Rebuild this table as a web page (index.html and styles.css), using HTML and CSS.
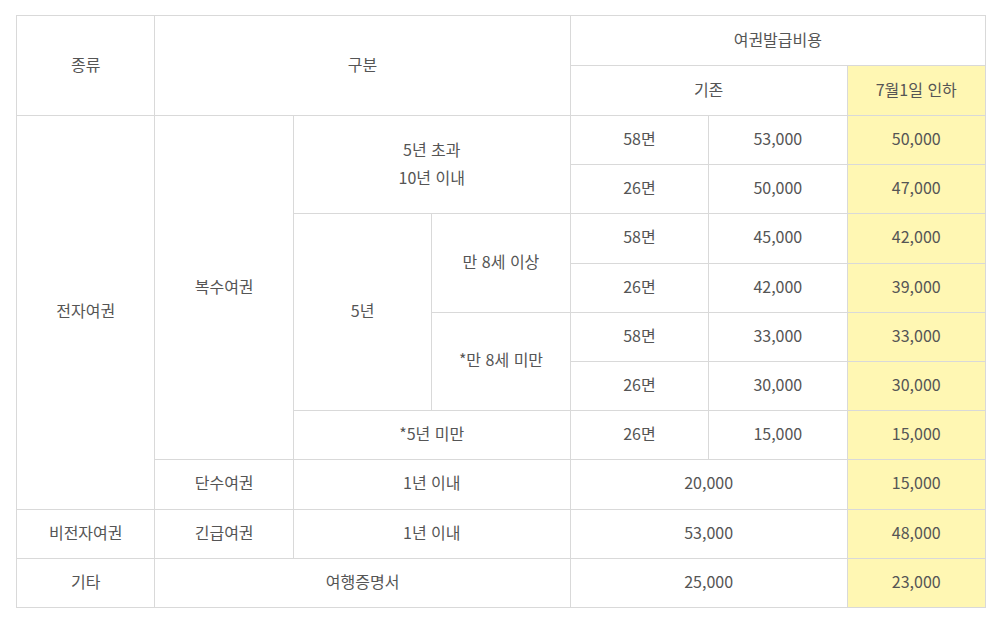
FILE: index.html
```html
<!DOCTYPE html>
<html lang="ko">
<head>
<meta charset="utf-8">
<link rel="stylesheet" href="styles.css">
</head>
<body>
<div class="wrap">
<table class="fee">
  <colgroup>
    <col><col><col><col><col><col><col>
  </colgroup>
  <tr class="hd">
    <td rowspan="2">종류</td>
    <td rowspan="2" colspan="3">구분</td>
    <td colspan="3">여권발급비용</td>
  </tr>
  <tr class="hd">
    <td colspan="2">기존</td>
    <td class="hl">7월1일 인하</td>
  </tr>
  <tr>
    <td rowspan="8">전자여권</td>
    <td rowspan="7">복수여권</td>
    <td rowspan="2" colspan="2" class="two">5년 초과<br>10년 이내</td>
    <td>58면</td><td>53,000</td><td class="hl">50,000</td>
  </tr>
  <tr>
    <td>26면</td><td>50,000</td><td class="hl">47,000</td>
  </tr>
  <tr>
    <td rowspan="4">5년</td>
    <td rowspan="2">만 8세 이상</td>
    <td>58면</td><td>45,000</td><td class="hl">42,000</td>
  </tr>
  <tr>
    <td>26면</td><td>42,000</td><td class="hl">39,000</td>
  </tr>
  <tr>
    <td rowspan="2">*만 8세 미만</td>
    <td>58면</td><td>33,000</td><td class="hl">33,000</td>
  </tr>
  <tr>
    <td>26면</td><td>30,000</td><td class="hl">30,000</td>
  </tr>
  <tr>
    <td colspan="2">*5년 미만</td>
    <td>26면</td><td>15,000</td><td class="hl">15,000</td>
  </tr>
  <tr>
    <td>단수여권</td>
    <td colspan="2">1년 이내</td>
    <td colspan="2">20,000</td><td class="hl">15,000</td>
  </tr>
  <tr>
    <td>비전자여권</td>
    <td>긴급여권</td>
    <td colspan="2">1년 이내</td>
    <td colspan="2">53,000</td><td class="hl">48,000</td>
  </tr>
  <tr>
    <td>기타</td>
    <td colspan="3">여행증명서</td>
    <td colspan="2">25,000</td><td class="hl">23,000</td>
  </tr>
</table>
</div>
</body>
</html>
```
FILE: styles.css
```css
html, body {
  margin: 0;
  padding: 0;
  background: #ffffff;
}
.wrap {
  padding: 15px 0 0 16px;
}
.fee {
  width: 970px;
  border-collapse: collapse;
  table-layout: fixed;
  font-family: "Noto Sans CJK KR", "Noto Sans", sans-serif;
  font-size: 16px;
  color: #555555;
}
.fee td {
  border: 1px solid #d9d9d9;
  height: 44.2px;
  padding: 0 0 4px 0;
  text-align: center;
  vertical-align: middle;
  line-height: 20px;
}
.fee tr.hd td {
  height: 45px;
}
.fee td.two {
  line-height: 28px;
}
.fee td.hl {
  background: #fff7b3;
}
```
